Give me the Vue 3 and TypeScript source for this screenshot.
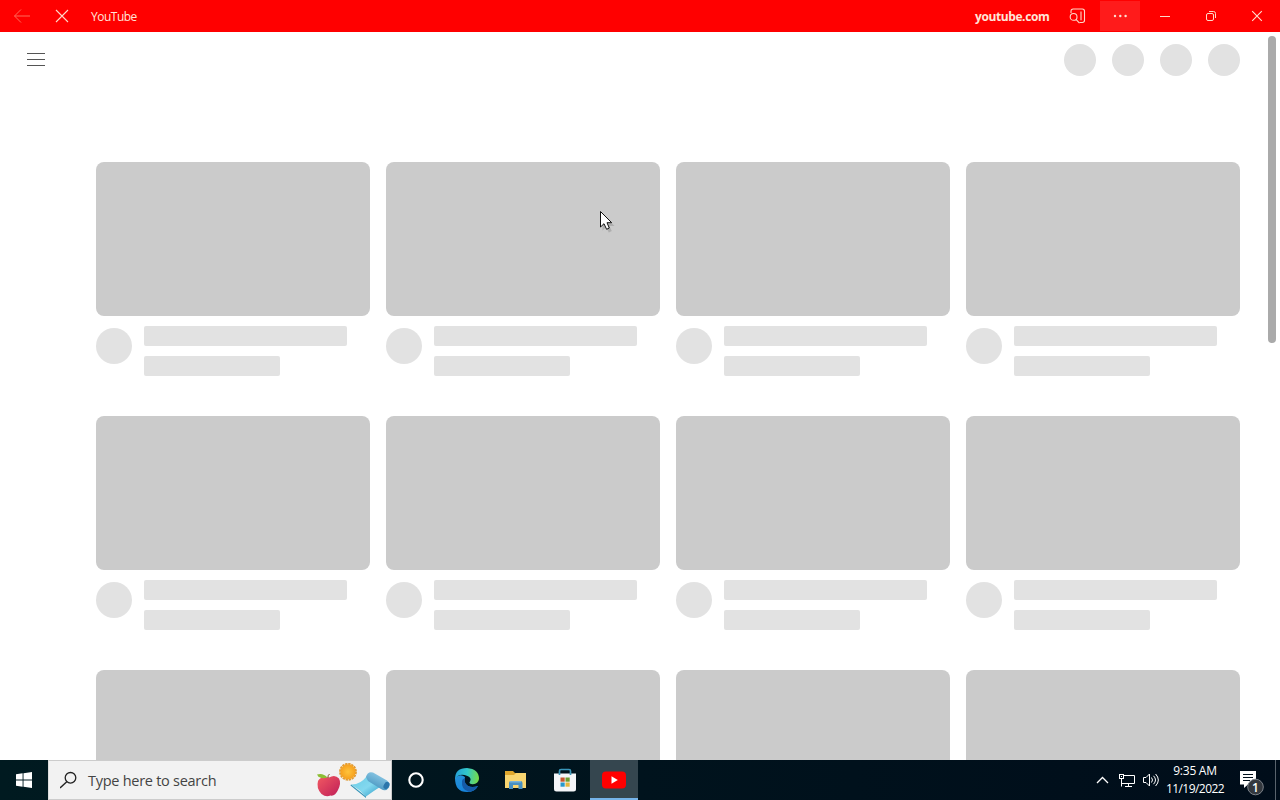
<script setup lang="ts">
const rows: number[] = [0, 1, 2]
const columns: number[] = [0, 1, 2, 3]
const apps: string[] = ['cortana', 'edge', 'explorer', 'store', 'youtube']
</script>

<template>
  <div class="desktop">
    <header class="titlebar">
      <button class="nav" aria-label="Back">
        <svg width="18" height="16" viewBox="0 0 18 16"><path d="M17 8H1.5M8 1.5 1.5 8 8 14.5" stroke="#ff6a5a" /></svg>
      </button>
      <button class="nav" aria-label="Stop">
        <svg width="14" height="14" viewBox="0 0 14 14"><path d="m1 1 12 12M13 1 1 13" stroke="#ffd9c8" stroke-width="1.1" /></svg>
      </button>
      <span class="title">YouTube</span>
      <span class="origin">youtube.com</span>
      <button class="tool" aria-label="Search in sidebar">
        <svg width="18" height="16" viewBox="0 0 18 16">
          <path d="M2 5V3.2Q2 1 4.2 1H13.3Q15.5 1 15.5 3.2V12.3Q15.5 14.500 13.3 14.500H10.500M12 3.500v8.700" stroke="#ffd9c8" stroke-width="1.100" />
          <circle cx="4.600" cy="8.900" r="3.400" stroke="#ffd9c8" stroke-width="1.100" />
          <path d="m7 11.400 3.500 3.800" stroke="#ffd9c8" stroke-width="1.100" />
        </svg>
      </button>
      <button class="tool more" aria-label="More">
        <svg width="16" height="4" viewBox="0 0 16 4" class="dots"><circle cx="3" cy="2" r="1.2" /><circle cx="8.3" cy="2" r="1.2" /><circle cx="13.600" cy="2" r="1.2" /></svg>
      </button>
      <button class="caption" aria-label="Minimize">
        <svg width="12" height="12" viewBox="0 0 12 12"><path d="M1 6.5h10" stroke="#ffd9c8" /></svg>
      </button>
      <button class="caption" aria-label="Restore">
        <svg width="12" height="12" viewBox="0 0 12 12"><rect x="1.5" y="3.5" width="7" height="7" rx="1.5" stroke="#ffd9c8" /><path d="M4 1.5h4.5q2 0 2 2V8" stroke="#ffd9c8" /></svg>
      </button>
      <button class="caption" aria-label="Close">
        <svg width="12" height="12" viewBox="0 0 12 12"><path d="m1.2 1.2 9.6 9.6M10.8 1.2 1.2 10.8" stroke="#ffe0d2" stroke-width="1.1" /></svg>
      </button>
    </header>

    <main class="page">
      <div class="masthead">
        <div class="burger"><i /><i /><i /></div>
        <div class="actions"><span v-for="c in columns" :key="c" /></div>
      </div>
      <div class="grid">
        <template v-for="r in rows" :key="r">
          <article v-for="c in columns" :key="c" class="card">
            <div class="thumb" />
            <div class="details">
              <div class="avatar" />
              <div class="lines"><div class="line long" /><div class="line short" /></div>
            </div>
          </article>
        </template>
      </div>
      <div class="scroll-thumb" />
    </main>

    <footer class="taskbar">
      <div class="start">
        <svg width="16" height="16" viewBox="0 0 16 16"><path fill="#fff" d="M0 2.3 6.6 1.3V7.5H0zM7.5 1.2 16 0v7.5H7.5zM0 8.5h6.6v6.2L0 13.8zM7.5 8.5H16V16l-8.5-1.2z" /></svg>
      </div>
      <div class="search">
        <svg class="lens" width="18" height="18" viewBox="0 0 18 18"><circle cx="10.500" cy="6.800" r="5.300" stroke="#222" stroke-width="1.300" /><path d="M6.800 10.700 0 17" stroke="#222" stroke-width="1.400" /></svg>
        <span class="prompt">Type here to search</span>
        <svg class="art" width="76" height="36" viewBox="0 0 76 36">
          <defs>
            <linearGradient id="apple" x1="0" y1="0" x2="1" y2="1"><stop offset="0" stop-color="#f25a62" /><stop offset="1" stop-color="#bf1e58" /></linearGradient>
            <linearGradient id="mat" x1="0" y1="0" x2="1" y2="1"><stop offset="0" stop-color="#69cbe4" /><stop offset=".55" stop-color="#83d8ef" /><stop offset="1" stop-color="#2f9bc6" /></linearGradient>
            <linearGradient id="roll" x1="0" y1="1" x2=".6" y2="0"><stop offset="0" stop-color="#3286b5" /><stop offset="1" stop-color="#91cce8" /></linearGradient>
            <radialGradient id="sun"><stop offset="0" stop-color="#ffc43c" /><stop offset="1" stop-color="#f6a01e" /></radialGradient>
          </defs>
          <path fill="url(#apple)" d="M14 14.500Q20 11 24 15.500Q26.500 20 23 27Q20 33.500 15.500 32.500Q11 34.500 6.500 31Q1 25 3 18Q6 12.500 14 14.500Z" />
          <path fill="#8dbd34" d="M2 11.500Q8 9.500 12.500 14.500Q5 17 2 11.500Z" />
          <path d="M13 15Q12.500 12.500 14.500 11" stroke="#83532d" />
          <circle cx="33" cy="8.800" r="8" stroke="#e09a32" stroke-width="1.800" stroke-dasharray="2.400 .74" />
          <circle cx="33" cy="8.800" r="7.500" fill="url(#sun)" />
          <path fill="url(#mat)" d="M36 21.500Q45 22 52 13L65 24Q60 27 51 33.500Q44 26 36 21.500Z" />
          <path fill="#3295b9" d="m36 21.500 15 12v1.500L35.500 22.500Z" />
          <path fill="url(#roll)" d="M51 14Q52.500 8 58 9.500L72 17.500Q75.500 20 74 24.500Q71 29 66 26L53 18Z" />
          <ellipse cx="71.500" cy="22.500" rx="2.700" ry="3.800" fill="#2c76ab" transform="rotate(30 71.5 22.5)" />
        </svg>
      </div>

      <div v-for="app in apps" :key="app" class="app" :class="app">
        <svg v-if="app === 'cortana'" width="18" height="18" viewBox="0 0 18 18"><circle cx="9" cy="9" r="6.700" stroke="#fff" stroke-width="2.100" /></svg>
        <svg v-else-if="app === 'edge'" width="26" height="26" viewBox="0 0 26 26">
          <defs>
            <linearGradient id="edge-top" x1="0" y1=".3" x2="1" y2=".4"><stop offset="0" stop-color="#249fd8" /><stop offset=".5" stop-color="#32c8c9" /><stop offset="1" stop-color="#75db48" /></linearGradient>
            <linearGradient id="edge-side" x1="0" y1="0" x2=".5" y2="1"><stop offset="0" stop-color="#2692d9" /><stop offset="1" stop-color="#1683da" /></linearGradient>
          </defs>
          <path fill="url(#edge-side)" d="M1 11Q1 25 13 25Q21 25 24 19Q18 21 14 19Q9 16 11 10Q6 6 1 11Z" />
          <path fill="#155ba8" d="M8 14Q7 23 15 24.800Q21 24 24 19Q18 21 14 19Q10 16.500 11 11.500Q8.500 11 8 14Z" />
          <path fill="url(#edge-top)" d="M1 12Q1 1 13 1Q25 2 25 12Q24 18 17 17Q14.500 16.300 16 14.500Q18 11 13.500 9Q5 5.500 1 12Z" />
        </svg>
        <svg v-else-if="app === 'explorer'" width="24" height="20" viewBox="0 0 24 20">
          <path fill="#dfa72d" d="M1 1h8l2 2h11v4H1z" />
          <path fill="#f8d570" d="M1 5h9l2-2h10v15H1z" />
          <path fill="#478fc1" d="M5 19v-6q0-2 2-2h9.500q2 0 2 2v6h-4v-4H9v4z" />
          <path fill="#77b3d9" d="M6 11h11v1.500H6z" />
        </svg>
        <svg v-else-if="app === 'store'" width="24" height="26" viewBox="0 0 24 26">
          <path fill="#f4f5f8" d="M1 6.500h22V22q0 2.500-2.500 2.500h-17Q1 24.500 1 22Z" />
          <path d="M6.500 8V4q0-1.500 1.500-1.500h8Q17.500 2.500 17.500 4v4" stroke="#3996b9" stroke-width="1.700" />
          <path fill="#c7562d" d="M7.500 10.500h4.200v4.200H7.500z" /><path fill="#6c9e2e" d="M12.500 10.500h4.200v4.200h-4.200z" />
          <path fill="#2998cc" d="M7.500 15.500h4.200v4.200H7.500z" /><path fill="#e5b63c" d="M12.500 15.500h4.200v4.200h-4.200z" />
        </svg>
        <svg v-else width="24" height="18" viewBox="0 0 24 18"><rect y=".5" width="24" height="17" rx="4" fill="#f00" /><path fill="#fff" d="m9.500 5.300 6.300 3.700-6.300 3.700z" /></svg>
      </div>

      <div class="tray">
        <svg width="13" height="8" viewBox="0 0 13 8"><path d="m1 7 5.500-5.500L12 7" stroke="#fff" stroke-width="1.300" /></svg>
        <svg class="network" width="17" height="15" viewBox="0 0 17 15"><path d="M6 2.500h10.500v8H4M10.500 10.500v3M7 13.500h7M3.500 6v7.500" stroke="#fff" /><rect x="1.500" y="1.500" width="4" height="4" stroke="#fff" /><path d="M3 3.500h1" stroke="#fff" /></svg>
        <svg class="sound" width="18" height="16" viewBox="0 0 18 16"><path d="M1.500 5.500H4L7.500 2v12L4 10.500H1.500zM9.500 5.500q2 2.500 0 5M11.500 3.800q4 4.200 0 8.400M13.600 2q5.500 6 0 12" stroke="#fff" /></svg>
        <div class="clock"><span class="time">9:35 AM</span><span class="date">11/19/2022</span></div>
        <svg class="notice" width="27" height="28" viewBox="0 0 27 28">
          <path fill="#fff" d="M1 1h16v13.500H9L5 18v-3.500H1z" />
          <path d="M4 4.500h10M4 7.500h10M4 10.500h7" stroke="#00101c" />
          <circle cx="16.500" cy="17" r="7.800" fill="#33383e" stroke="#7c8289" />
          <text x="16.500" y="21.500" text-anchor="middle" class="count">1</text>
        </svg>
      </div>
    </footer>

    <svg class="pointer" width="16" height="24" viewBox="0 0 16 24">
      <path d="M2.500 3v16.500L6.200 16l2.600 5.500 3-1.400L9.300 15h5.200z" fill="#777" opacity=".35" />
      <path d="M.5 .5v15.500l3.500-3.300 2.600 5.600 2.700-1.300L7 11.700h4.700z" fill="#fff" stroke="#111" />
    </svg>
  </div>
</template>

<style>
body { overflow: hidden; }
</style>

<style scoped>
* { box-sizing: border-box; }
svg { display: block; fill: none; flex-shrink: 0; }
button { border: 0; padding: 0; background: none; display: flex; align-items: center; justify-content: center; flex-shrink: 0; }
.desktop { position: relative; width: 1280px; height: 800px; display: flex; flex-direction: column; overflow: hidden; background: #fff; font-family: "Open Sans", "Noto Sans", sans-serif; }
.titlebar { height: 32px; flex: none; background: #f00; display: flex; align-items: center; color: #ffe5d9; font-size: 12px; line-height: 16px; white-space: nowrap; }
.nav { width: 40px; height: 32px; }
.nav:first-child { margin-left: 2px; }
.title { margin-left: 9px; margin-top: 2px; letter-spacing: -.5px; }
.origin { margin-left: auto; width: 75px; margin-right: 8px; margin-top: 2px; font-weight: 700; letter-spacing: -.4px; }
.tool { width: 40px; height: 30px; margin-right: 2px; }
.more { background: #ff1b1b; }
.dots { fill: #ffe0d2; }
.caption { width: 46px; height: 32px; }
.page { height: 728px; flex: none; display: flex; flex-direction: column; position: relative; overflow: hidden; }
.masthead { height: 56px; flex: none; padding: 0 40px 0 27px; display: flex; justify-content: space-between; align-items: center; }
.burger { display: flex; flex-direction: column; gap: 5px; width: 18px; margin-bottom: 2px; }
.burger i { height: 1px; background: #555; }
.actions { display: flex; gap: 16px; }
.actions span { width: 32px; height: 32px; border-radius: 50%; background: #e2e2e2; }
.grid { margin: 74px 40px 0 96px; display: grid; grid-template-columns: repeat(4, 274px); gap: 40px 16px; }
.card { height: 214px; }
.thumb { height: 154px; border-radius: 8px; background: #cbcbcb; }
.details { display: flex; gap: 12px; padding-top: 10px; }
.avatar { width: 36px; height: 36px; margin-top: 2px; border-radius: 50%; background: #e2e2e2; }
.lines { display: flex; flex-direction: column; gap: 10px; }
.line { height: 20px; border-radius: 2px; background: #e2e2e2; }
.long { width: 203px; }
.short { width: 136px; }
.scroll-thumb { position: absolute; top: 4px; right: 4px; width: 8px; height: 307px; border-radius: 4px; background: #aaa; }
.taskbar { height: 40px; flex: none; display: flex; background: linear-gradient(90deg, #001a20, #00131d 50%, #000d1a); }
.start { width: 48px; display: flex; align-items: center; justify-content: center; }
.search { width: 344px; height: 40px; display: flex; align-items: center; border: 1px solid #ccc; border-left-color: #ddd; background: #f2f2f2; padding-left: 11px; }
.prompt { width: 140px; margin-left: 10px; margin-top: 2px; font-size: 14.5px; line-height: 20px; letter-spacing: -.27px; color: #444; white-space: nowrap; }
.art { margin-left: auto; margin-top: 2px; }
.app { width: 48px; margin-right: 1px; display: flex; align-items: center; justify-content: center; }
.cortana { margin-right: 3px; }
.explorer { padding-bottom: 1px; }
.youtube { background: #35464f; border-bottom: 2px solid #76b4ea; padding-top: 2px; }
.tray { flex: 1; display: flex; align-items: center; justify-content: flex-end; border-right: 1px solid #59636c; margin-right: 4px; }
.network { margin-left: 9px; }
.sound { margin-left: 7px; }
.clock { width: 60px; margin-left: 5px; margin-right: 1px; display: flex; flex-direction: column; align-items: center; font-size: 12px; line-height: 17px; color: #fff; white-space: nowrap; }
.time { letter-spacing: -.25px; margin-top: -1px; }
.date { letter-spacing: -.55px; margin-top: 1px; }
.notice { margin-left: 13px; margin-right: 9px; margin-top: 7px; }
.count { fill: #fff; font-size: 12px; font-weight: 600; }
.pointer { position: absolute; left: 600px; top: 211px; }
</style>
